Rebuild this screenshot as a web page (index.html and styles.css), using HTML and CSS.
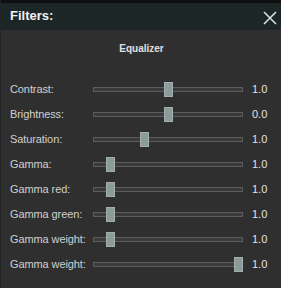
FILE: index.html
```html
<!DOCTYPE html>
<html lang="en">
<head>
    <meta charset="UTF-8">
    <title>Filters</title>
    <link rel="stylesheet" href="styles.css">
</head>
<body>
    <div class="panel">
        <div class="topbar"></div>
        <div class="header">
            <span class="header-title">Filters:</span>
            <svg class="close" width="14" height="14" viewBox="0 0 14 14">
                <path d="M1 1 L13 13 M13 1 L1 13" stroke="#d8dcdc" stroke-width="1.6" fill="none"/>
            </svg>
        </div>

        <div class="content">
            <div class="section-title">Equalizer</div>

            <div class="row">
                <span class="label">Contrast:</span>
                <div class="track"><div class="thumb" style="left: 70px"></div></div>
                <span class="value">1.0</span>
            </div>
            <div class="row">
                <span class="label">Brightness:</span>
                <div class="track"><div class="thumb" style="left: 70px"></div></div>
                <span class="value">0.0</span>
            </div>
            <div class="row">
                <span class="label">Saturation:</span>
                <div class="track"><div class="thumb" style="left: 46px"></div></div>
                <span class="value">1.0</span>
            </div>
            <div class="row">
                <span class="label">Gamma:</span>
                <div class="track"><div class="thumb" style="left: 12px"></div></div>
                <span class="value">1.0</span>
            </div>
            <div class="row">
                <span class="label">Gamma red:</span>
                <div class="track"><div class="thumb" style="left: 12px"></div></div>
                <span class="value">1.0</span>
            </div>
            <div class="row">
                <span class="label">Gamma green:</span>
                <div class="track"><div class="thumb" style="left: 12px"></div></div>
                <span class="value">1.0</span>
            </div>
            <div class="row">
                <span class="label">Gamma weight:</span>
                <div class="track"><div class="thumb" style="left: 12px"></div></div>
                <span class="value">1.0</span>
            </div>
            <div class="row">
                <span class="label">Gamma weight:</span>
                <div class="track"><div class="thumb" style="left: 140px"></div></div>
                <span class="value">1.0</span>
            </div>
        </div>
    </div>
</body>
</html>
```
FILE: styles.css
```css
body {
    margin: 0;
    padding: 0;
    background-color: #2f2f2f;
    font-family: 'Liberation Sans', Arial, sans-serif;
    color: #d4d4d4;
}

.panel {
    width: 281px;
    height: 288px;
    background-color: #2f2f2f;
    border-left: 1px solid #242424;
    box-sizing: border-box;
    overflow: hidden;
}

.topbar {
    height: 3px;
    background-color: #0e0e0e;
}

.header {
    height: 27px;
    background-color: #1d2627;
    display: flex;
    align-items: center;
    justify-content: space-between;
    padding: 0 4px 0 9px;
}

.header-title {
    font-size: 13px;
    font-weight: bold;
    color: #f2f2f2;
    margin-top: -2px;
}

.close {
    margin-top: 2px;
}

.content {
    padding-top: 12px;
}

.section-title {
    text-align: center;
    font-size: 10px;
    font-weight: bold;
    color: #e0e0e0;
    line-height: 14px;
    margin-bottom: 21px;
    padding-left: 1px;
}

.row {
    display: flex;
    align-items: center;
    height: 25px;
}

.label {
    flex: 0 0 92px;
    padding-left: 9px;
    box-sizing: border-box;
    font-size: 11px;
    letter-spacing: -0.1px;
    white-space: nowrap;
    color: #d0d0d0;
    margin-bottom: 2px;
}

.track {
    position: relative;
    flex: 0 0 150px;
    height: 5px;
    box-sizing: border-box;
    border: 1px solid #5c5c5c;
    background-color: #3a3a3a;
}

.thumb {
    position: absolute;
    top: -6px;
    width: 9px;
    height: 15px;
    box-sizing: border-box;
    background-color: #8d9b9b;
    border: 1px solid #a3afaf;
}

.value {
    margin-left: 9px;
    margin-bottom: 1px;
    font-size: 11px;
    color: #e2e2e2;
}
```
